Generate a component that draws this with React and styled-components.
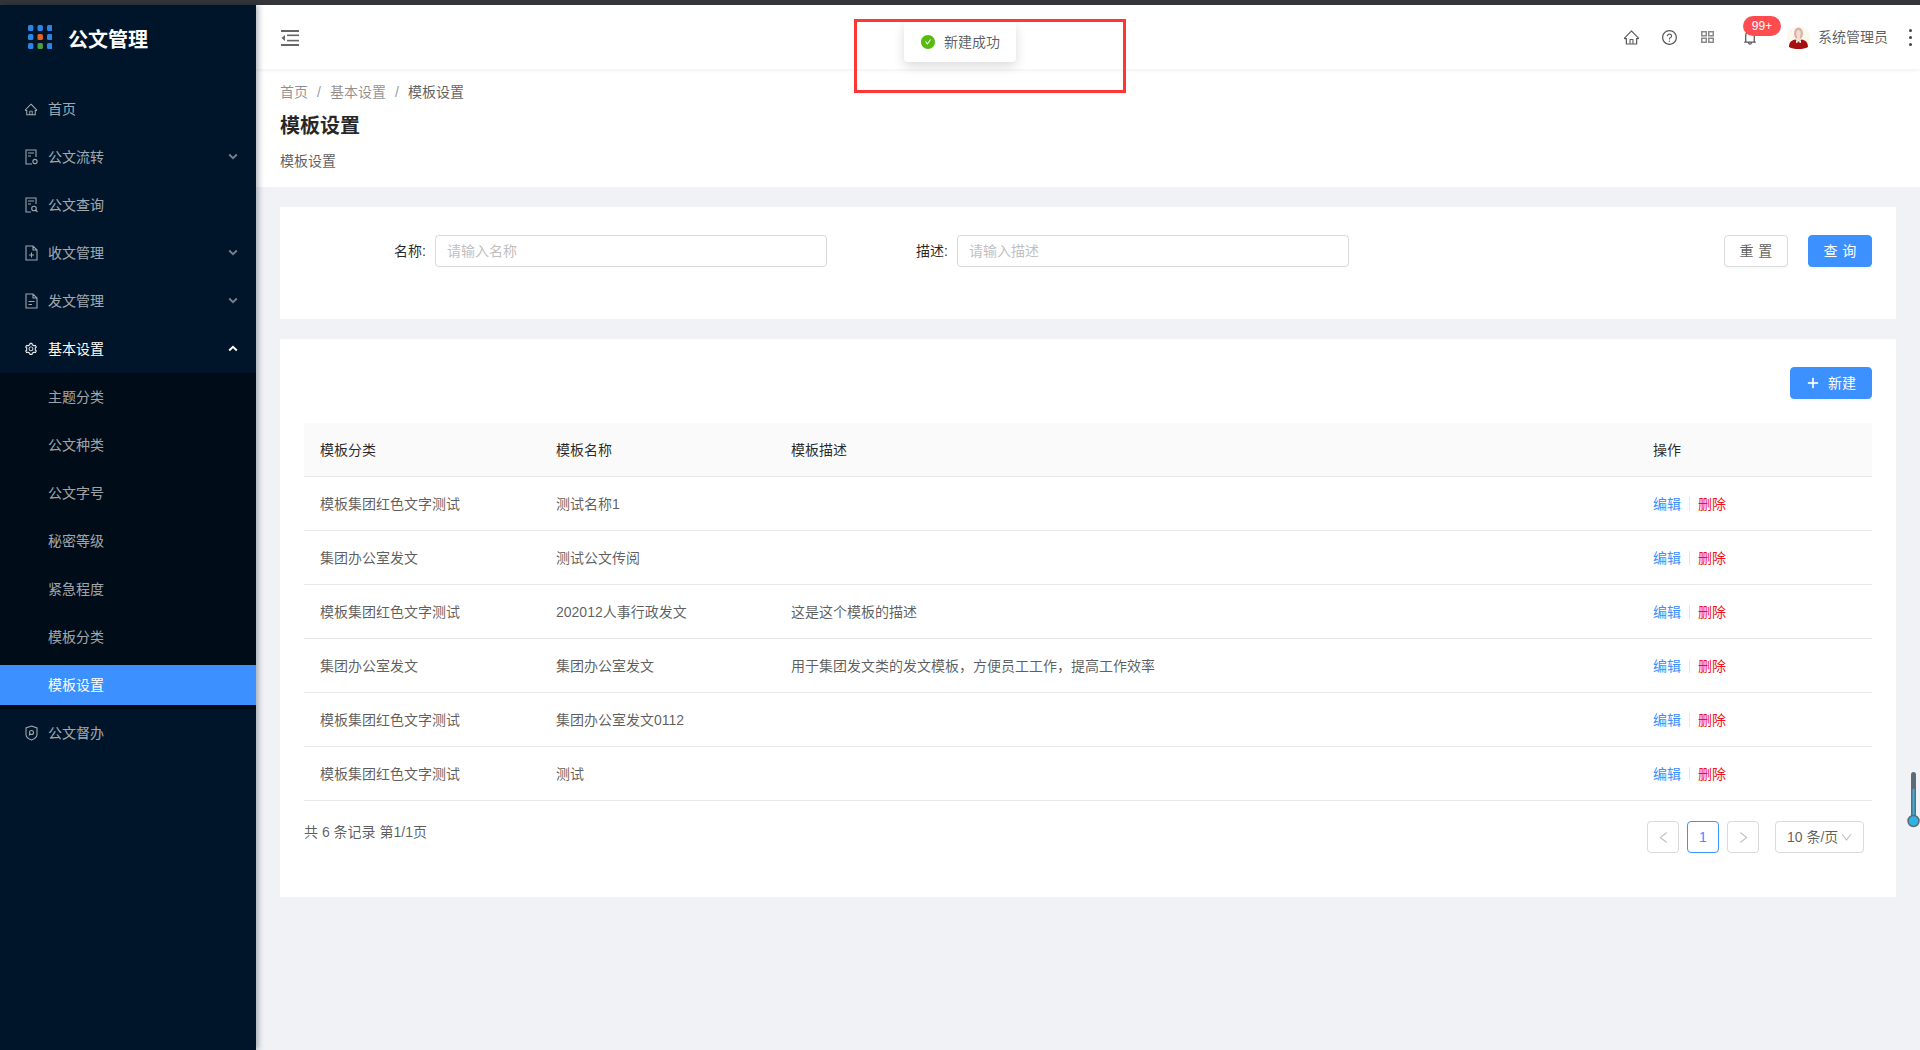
import React from "react";
import styled, { createGlobalStyle } from "styled-components";
import {
  AiFillCheckCircle,
  AiOutlineBell,
  AiOutlineDown,
  AiOutlineHome,
  AiOutlineLeft,
  AiOutlinePlus,
  AiOutlineQuestionCircle,
  AiOutlineRight,
  AiOutlineSetting,
} from "react-icons/ai";

const BLUE = "#3c90ff";

const GlobalStyle = createGlobalStyle`
  html, body {
    margin: 0;
    height: 100%;
    background: #f0f2f5;
    overflow: hidden;
  }
  body {
    font-family: "Liberation Sans", "Noto Sans CJK SC", sans-serif;
    font-size: 14px;
    line-height: 22px;
    color: rgba(0, 0, 0, 0.65);
  }
  * {
    box-sizing: border-box;
  }
`;

const Page = styled.div`
  position: relative;
  width: 1920px;
  height: 1050px;
  display: flex;
  flex-direction: column;
  overflow: hidden;
`;

const TopStrip = styled.div`
  height: 5px;
  flex-shrink: 0;
  background: #343639;
`;

const Body = styled.div`
  flex: 1;
  display: flex;
  min-height: 0;
`;

/* 사이드바 */
const Sidebar = styled.aside`
  position: relative;
  z-index: 2;
  width: 256px;
  flex-shrink: 0;
  background: #001529;
  box-shadow: 2px 0 6px rgba(0, 21, 41, 0.35);
`;

const Logo = styled.div`
  height: 64px;
  display: flex;
  align-items: center;
  padding-left: 28px;
  gap: 16px;
`;

const LogoTitle = styled.h1`
  margin: 5px 0 0;
  font-size: 20px;
  line-height: 28px;
  font-weight: 700;
  color: #fff;
`;

const Menu = styled.nav`
  padding-top: 20px;
`;

const MenuRow = styled.div`
  height: 40px;
  margin-bottom: ${(p) => (p.$open ? "4px" : "8px")};
  padding: 0 18px 0 24px;
  display: flex;
  align-items: center;
  line-height: 40px;
  color: ${(p) => (p.$active ? "#fff" : "rgba(255, 255, 255, 0.65)")};
`;

const MenuIcon = styled.span`
  width: 14px;
  margin-right: 10px;
  display: flex;
  justify-content: center;
`;

const Chevron = styled.svg`
  margin: 0 0 1px auto;
  width: 10px;
  height: 7px;
`;

const SubMenu = styled.div`
  background: #000c17;
  margin-bottom: 4px;
  padding: 4px 0;
`;

const SubRow = styled.div`
  height: 40px;
  padding-left: 48px;
  line-height: 40px;
  color: ${(p) => (p.$active ? "#fff" : "rgba(255, 255, 255, 0.65)")};
  background: ${(p) => (p.$active ? BLUE : "transparent")};
  & + & {
    margin-top: 8px;
  }
`;

/* 본문 */
const Main = styled.main`
  flex: 1;
  min-width: 0;
  display: flex;
  flex-direction: column;
`;

const Header = styled.header`
  position: relative;
  z-index: 1;
  height: 64px;
  flex-shrink: 0;
  background: #fff;
  box-shadow: 0 1px 4px rgba(0, 21, 41, 0.08);
  padding: 0 5px 0 25px;
  display: flex;
  align-items: center;
  justify-content: space-between;
`;

const CollapseBox = styled.div`
  margin-top: 1px;
  display: flex;
`;

const Actions = styled.div`
  display: flex;
  align-items: center;
  color: #595959;
`;

const ActionIcon = styled.span`
  position: relative;
  width: 38px;
  height: 20px;
  display: flex;
  align-items: center;
  justify-content: center;
  font-size: ${(p) => p.$size || 17}px;
  margin-left: ${(p) => p.$gap || 0}px;
`;

const Badge = styled.span`
  position: absolute;
  top: -11px;
  left: 12px;
  width: 38px;
  height: 20px;
  border-radius: 10px;
  background: #ff4d4f;
  color: #fff;
  font-size: 12px;
  line-height: 20px;
  text-align: center;
`;

const UserBox = styled.div`
  margin-left: 18px;
  display: flex;
  align-items: center;
  gap: 8px;
  color: rgba(0, 0, 0, 0.65);
`;

const More = styled.div`
  margin-left: 17px;
  width: 10px;
  display: flex;
  flex-direction: column;
  align-items: center;
  gap: 4px;
`;

const MoreDot = styled.span`
  width: 3px;
  height: 3px;
  border-radius: 50%;
  background: #444;
`;

const PageHead = styled.section`
  background: #fff;
  padding: 12px 24px 15px;
`;

const Crumbs = styled.div`
  display: flex;
  color: rgba(0, 0, 0, 0.45);
`;

const CrumbSep = styled.span`
  width: 6px;
  margin: 0 8px;
  text-align: center;
`;

const CrumbLast = styled.span`
  color: rgba(0, 0, 0, 0.65);
`;

const PageTitle = styled.h2`
  margin: 7px 0 8px;
  font-size: 20px;
  line-height: 32px;
  font-weight: 700;
  color: rgba(0, 0, 0, 0.85);
`;

const PageDesc = styled.div``;

const Content = styled.div`
  padding: 20px 24px;
  display: flex;
  flex-direction: column;
  gap: 20px;
`;

const SearchCard = styled.section`
  background: #fff;
  padding: 28px 24px 52px;
  display: grid;
  grid-template-columns: 131px 392px 130px 392px 1fr;
  align-items: center;
`;

const FieldLabel = styled.label`
  padding-right: 9px;
  text-align: right;
  color: rgba(0, 0, 0, 0.85);
`;

const TextInput = styled.input`
  height: 32px;
  width: 100%;
  padding: 4px 11px;
  border: 1px solid #d9d9d9;
  border-radius: 4px;
  font: inherit;
  outline: none;
  &::placeholder {
    color: #bfbfbf;
  }
`;

const SearchButtons = styled.div`
  display: flex;
  justify-content: flex-end;
  gap: 20px;
`;

const Button = styled.button`
  height: 32px;
  width: ${(p) => p.$width || 64}px;
  padding: 0;
  display: inline-flex;
  align-items: center;
  justify-content: center;
  gap: 8px;
  border-radius: 4px;
  border: 1px solid ${(p) => (p.$primary ? BLUE : "#d9d9d9")};
  background: ${(p) => (p.$primary ? BLUE : "#fff")};
  color: ${(p) => (p.$primary ? "#fff" : "rgba(0, 0, 0, 0.65)")};
  box-shadow: 0 2px 0 rgba(0, 0, 0, 0.015);
  font: inherit;
`;

const SpacedLabel = styled.span`
  letter-spacing: 0.34em;
  margin-right: -0.34em;
`;

const PlusIcon = styled(AiOutlinePlus)`
  font-size: 14px;
  stroke: currentColor;
  stroke-width: 50;
`;

const TableCard = styled.section`
  background: #fff;
  padding: 28px 24px 44px;
`;

const Toolbar = styled.div`
  display: flex;
  justify-content: flex-end;
  margin-bottom: 24px;
`;

const Table = styled.table`
  width: 100%;
  table-layout: fixed;
  border-collapse: separate;
  border-spacing: 0;
  line-height: 21px;
`;

const HeadCell = styled.th`
  width: ${(p) => p.$width};
  padding: 17px 16px 15px;
  background: #fafafa;
  border-bottom: 1px solid #e8e8e8;
  text-align: left;
  font-weight: 400;
  color: rgba(0, 0, 0, 0.85);
  &:first-child {
    border-top-left-radius: 4px;
  }
  &:last-child {
    border-top-right-radius: 4px;
  }
`;

const Cell = styled.td`
  padding: 17px 16px 15px;
  border-bottom: 1px solid #e8e8e8;
`;

const EditLink = styled.a`
  color: ${BLUE};
`;

const DeleteLink = styled.a`
  color: #f01020;
`;

const LinkDivider = styled.span`
  display: inline-block;
  width: 1px;
  height: 14px;
  margin: 0 8px;
  vertical-align: -2px;
  background: #e8e8e8;
`;

const Pager = styled.div`
  margin-top: 20px;
  padding-right: 8px;
  display: flex;
  justify-content: space-between;
  align-items: flex-start;
`;

const PagerItems = styled.div`
  display: flex;
  gap: 8px;
`;

const PageBox = styled.span`
  width: 32px;
  height: 32px;
  display: flex;
  align-items: center;
  justify-content: center;
  font-size: ${(p) => (p.$active ? "14px" : "15px")};
  border: 1px solid ${(p) => (p.$active ? BLUE : "#d9d9d9")};
  border-radius: 4px;
  color: ${(p) => (p.$active ? BLUE : "#bfbfbf")};
`;

const SizeSelect = styled.span`
  width: 89px;
  height: 32px;
  margin-left: 8px;
  padding: 0 10px 0 11px;
  display: flex;
  align-items: center;
  justify-content: space-between;
  white-space: nowrap;
  border: 1px solid #d9d9d9;
  border-radius: 4px;
`;

const SelectArrow = styled(AiOutlineDown)`
  font-size: 13px;
  flex-shrink: 0;
  color: #bfbfbf;
`;

/* 위에 떠 있는 것들 */
const Toast = styled.div`
  position: absolute;
  z-index: 5;
  top: 22px;
  left: 904px;
  height: 40px;
  padding: 0 16px;
  display: flex;
  align-items: center;
  gap: 8px;
  background: #fff;
  border-radius: 4px;
  box-shadow: 0 4px 12px rgba(0, 0, 0, 0.15);
`;

const ToastIcon = styled(AiFillCheckCircle)`
  font-size: 16px;
  color: #58bc0c;
`;

const MarkBox = styled.div`
  position: absolute;
  z-index: 6;
  top: 19px;
  left: 854px;
  width: 272px;
  height: 74px;
  border: 3px solid #ff3636;
`;

const Thermometer = styled.svg`
  position: absolute;
  z-index: 6;
  top: 771px;
  left: 1907px;
  width: 13px;
  height: 58px;
`;

const stroke = {
  fill: "none",
  stroke: "rgba(255,255,255,0.62)",
  strokeWidth: 1.1,
};

function LogoMark() {
  const colors = ["#2b84e6", "#2b84e6", "#2b84e6", "#2b84e6", "#e8641b", "#2b84e6", "#2b84e6", "#4a9f3c", "#2b84e6"];
  return (
    <svg width="24" height="24" viewBox="0 0 24 24">
      {colors.map((c, i) => (
        <rect key={i} x={(i % 3) * 9.5} y={Math.floor(i / 3) * 9} width="5.4" height="6" rx="1.5" fill={c} />
      ))}
    </svg>
  );
}

function FlowIcon() {
  return (
    <svg width="13" height="16" viewBox="0 0 13 16" {...stroke}>
      <path d="M11 8V1H1v14h6M3 4h6M3 7h3" />
      <circle cx="10" cy="12.5" r="2.1" />
    </svg>
  );
}

function QueryIcon() {
  return (
    <svg width="13" height="16" viewBox="0 0 13 16" {...stroke}>
      <path d="M11 7V1H1v14h5M3 4h6M3 7h3" />
      <circle cx="9" cy="11.5" r="2.3" />
      <path d="M10.7 13.2l1.8 1.8" />
    </svg>
  );
}

function AddDocIcon() {
  return (
    <svg width="13" height="16" viewBox="0 0 13 16" {...stroke}>
      <path d="M1 1h7l4 4v10H1zM8 1v4h4M6.5 7.5v5M4 10h5" />
    </svg>
  );
}

function SendDocIcon() {
  return (
    <svg width="13" height="16" viewBox="0 0 13 16" {...stroke}>
      <path d="M1 1h7l4 4v10H1zM8 1v4h4M3.5 8.5h6M3.5 11.5h3.5" />
    </svg>
  );
}

function ShieldIcon() {
  return (
    <svg width="13" height="16" viewBox="0 0 13 16" {...stroke}>
      <path d="M6.5 1l5.5 2v6.5c0 2.6-2.6 4.4-5.5 5.5C3.600 13.900 1 12.100 1 9.500V3z" />
      <circle cx="6.500" cy="7.500" r="2" />
      <path d="M5 9.200l-1 1.300" />
    </svg>
  );
}

function MenuChevron({ up, color }) {
  return (
    <Chevron viewBox="0 0 10 7">
      <path
        d={up ? "M1.200 5.500L5 1.800l3.800 3.700" : "M1.200 1.500L5 5.200l3.800-3.700"}
        fill="none"
        stroke={color}
        strokeWidth="2"
      />
    </Chevron>
  );
}

function CollapseIcon() {
  return (
    <svg width="18" height="16" viewBox="0 0 18 16" fill="#666">
      <rect width="18" height="2" />
      <rect y="14" width="18" height="2" />
      <rect x="6" y="4.500" width="12" height="1.600" />
      <rect x="6" y="9.800" width="12" height="1.600" />
      <path d="M0.500 8L4 5v6z" />
    </svg>
  );
}

function GridIcon() {
  return (
    <svg width="13" height="12" viewBox="0 0 13 12" fill="none" stroke="#8a8a8a" strokeWidth="1.500">
      <rect x="0.750" y="0.750" width="4.500" height="4" />
      <rect x="7.750" y="0.750" width="4.500" height="4" />
      <rect x="0.750" y="7.250" width="4.500" height="4" />
      <rect x="7.750" y="7.250" width="4.500" height="4" />
    </svg>
  );
}

function Avatar() {
  return (
    <svg width="23" height="23" viewBox="0 0 23 23">
      <circle cx="11.500" cy="11.500" r="11.500" fill="#fdf8ec" />
      <ellipse cx="11.500" cy="7.500" rx="4.500" ry="6" fill="#d9b2a8" />
      <ellipse cx="11.500" cy="7.500" rx="2.200" ry="3.500" fill="#efdcd4" />
      <path d="M10.200 10h2.600l.5 4h-3.600z" fill="#efdcd4" />
      <path d="M2 21c0-5 3-7 6.500-7.500l3 2 3-2C18 14 21 16 21 21c-2.500 1.500-5.500 2-9.500 2S4.500 22.500 2 21z" fill="#a60f0f" />
      <path d="M9 14l2.500 2 2.500-2v3l-2.500-1-2.500 1z" fill="#fff" />
    </svg>
  );
}

const menuTop = [
  { label: "首页", icon: <AiOutlineHome size={17} /> },
  { label: "公文流转", icon: <FlowIcon />, arrow: true },
  { label: "公文查询", icon: <QueryIcon /> },
  { label: "收文管理", icon: <AddDocIcon />, arrow: true },
  { label: "发文管理", icon: <SendDocIcon />, arrow: true },
];

const subMenu = ["主题分类", "公文种类", "公文字号", "秘密等级", "紧急程度", "模板分类", "模板设置"];

const rows = [
  ["模板集团红色文字测试", "测试名称1", ""],
  ["集团办公室发文", "测试公文传阅", ""],
  ["模板集团红色文字测试", "202012人事行政发文", "这是这个模板的描述"],
  ["集团办公室发文", "集团办公室发文", "用于集团发文类的发文模板，方便员工工作，提高工作效率"],
  ["模板集团红色文字测试", "集团办公室发文0112", ""],
  ["模板集团红色文字测试", "测试", ""],
];

export default function App() {
  return (
    <Page>
      <GlobalStyle />
      <TopStrip />
      <Body>
        <Sidebar>
          <Logo>
            <LogoMark />
            <LogoTitle>公文管理</LogoTitle>
          </Logo>
          <Menu>
            {menuTop.map((m) => (
              <MenuRow key={m.label}>
                <MenuIcon>{m.icon}</MenuIcon>
                {m.label}
                {m.arrow && <MenuChevron color="rgba(255,255,255,0.45)" />}
              </MenuRow>
            ))}
            <MenuRow $active $open>
              <MenuIcon>
                <AiOutlineSetting size={18} />
              </MenuIcon>
              基本设置
              <MenuChevron up color="#fff" />
            </MenuRow>
            <SubMenu>
              {subMenu.map((s) => (
                <SubRow key={s} $active={s === "模板设置"}>
                  {s}
                </SubRow>
              ))}
            </SubMenu>
            <MenuRow>
              <MenuIcon>
                <ShieldIcon />
              </MenuIcon>
              公文督办
            </MenuRow>
          </Menu>
        </Sidebar>

        <Main>
          <Header>
            <CollapseBox>
              <CollapseIcon />
            </CollapseBox>
            <Actions>
              <ActionIcon>
                <AiOutlineHome />
              </ActionIcon>
              <ActionIcon>
                <AiOutlineQuestionCircle />
              </ActionIcon>
              <ActionIcon>
                <GridIcon />
              </ActionIcon>
              <ActionIcon $gap={5} $size={18}>
                <AiOutlineBell />
                <Badge>99+</Badge>
              </ActionIcon>
              <UserBox>
                <Avatar />
                系统管理员
              </UserBox>
              <More>
                <MoreDot />
                <MoreDot />
                <MoreDot />
              </More>
            </Actions>
          </Header>

          <PageHead>
            <Crumbs>
              首页
              <CrumbSep>/</CrumbSep>
              基本设置
              <CrumbSep>/</CrumbSep>
              <CrumbLast>模板设置</CrumbLast>
            </Crumbs>
            <PageTitle>模板设置</PageTitle>
            <PageDesc>模板设置</PageDesc>
          </PageHead>

          <Content>
            <SearchCard>
              <FieldLabel>名称:</FieldLabel>
              <TextInput placeholder="请输入名称" />
              <FieldLabel>描述:</FieldLabel>
              <TextInput placeholder="请输入描述" />
              <SearchButtons>
                <Button>
                  <SpacedLabel>重置</SpacedLabel>
                </Button>
                <Button $primary>
                  <SpacedLabel>查询</SpacedLabel>
                </Button>
              </SearchButtons>
            </SearchCard>

            <TableCard>
              <Toolbar>
                <Button $primary $width={82}>
                  <PlusIcon />
                  新建
                </Button>
              </Toolbar>
              <Table>
                <thead>
                  <tr>
                    <HeadCell $width="236px">模板分类</HeadCell>
                    <HeadCell $width="235px">模板名称</HeadCell>
                    <HeadCell>模板描述</HeadCell>
                    <HeadCell $width="235px">操作</HeadCell>
                  </tr>
                </thead>
                <tbody>
                  {rows.map((r, i) => (
                    <tr key={i}>
                      <Cell>{r[0]}</Cell>
                      <Cell>{r[1]}</Cell>
                      <Cell>{r[2]}</Cell>
                      <Cell>
                        <EditLink>编辑</EditLink>
                        <LinkDivider />
                        <DeleteLink>删除</DeleteLink>
                      </Cell>
                    </tr>
                  ))}
                </tbody>
              </Table>
              <Pager>
                <span>共 6 条记录 第1/1页</span>
                <PagerItems>
                  <PageBox>
                    <AiOutlineLeft />
                  </PageBox>
                  <PageBox $active>1</PageBox>
                  <PageBox>
                    <AiOutlineRight />
                  </PageBox>
                  <SizeSelect>
                    10 条/页
                    <SelectArrow />
                  </SizeSelect>
                </PagerItems>
              </Pager>
            </TableCard>
          </Content>
        </Main>
      </Body>

      <Toast>
        <ToastIcon />
        新建成功
      </Toast>
      <MarkBox />
      <Thermometer viewBox="0 0 13 58">
        <rect x="4" y="1" width="5" height="48" rx="2.500" fill="#5d6b76" />
        <rect x="5.500" y="18" width="2" height="32" fill="#2fb2e4" />
        <circle cx="6.500" cy="50" r="5.500" fill="#2fb2e4" stroke="#5d6b76" strokeWidth="1.500" />
      </Thermometer>
    </Page>
  );
}
